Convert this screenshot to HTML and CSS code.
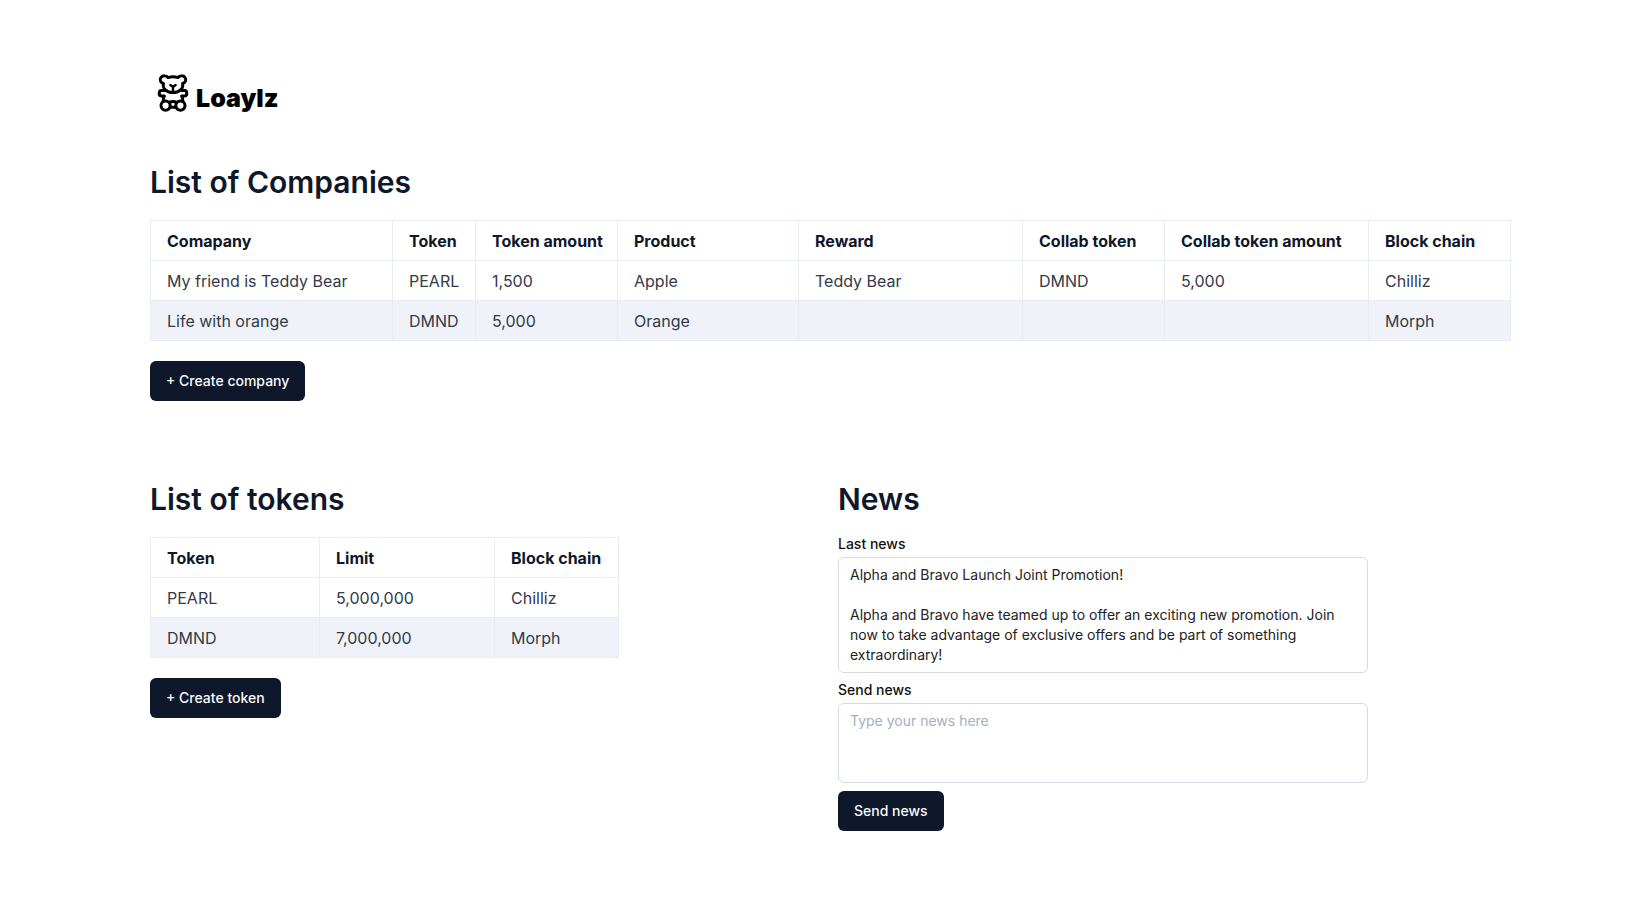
FILE: index.html
```html
<!DOCTYPE html>
<html lang="en">
<head>
<meta charset="utf-8">
<meta name="viewport" content="width=device-width, initial-scale=1">
<title>Loaylz</title>
<link rel="stylesheet" href="styles.css">
</head>
<body>
<div class="page">
  <header class="brand">
    <svg class="brand-icon" viewBox="0 0 32 38" aria-hidden="true">
      <g fill="none" stroke="currentColor" stroke-width="3" stroke-linecap="round" stroke-linejoin="round">
        <path d="M11 3.600C9.500 1.400 5.500 1.200 3.900 3.600C2.200 6 3.600 8.600 6.400 9.400C5.200 14.500 9.500 18.600 16 18.600S26.800 14.500 25.600 9.400C28.400 8.600 29.800 6 28.100 3.600C26.500 1.200 22.500 1.400 21 3.600C18 2.600 14 2.600 11 3.600Z"/>
        <path stroke-width="2.400" d="M13.400 11L16 13L18.600 11M16 13V17"/>
        <path d="M8 16.400H4.600C1.400 16.400 1.400 22 4.600 22H7.400C6.600 23.500 6.200 25 6.200 27"/>
        <path d="M24 16.400H27.400C30.600 16.400 30.600 22 27.400 22H24.600C25.400 23.500 25.800 25 25.800 27"/>
        <circle cx="8.600" cy="31.600" r="4.600"/>
        <circle cx="23.400" cy="31.600" r="4.600"/>
        <path d="M12.200 28.400C14.600 27.400 17.400 27.400 19.800 28.400M13.200 33.200H18.800"/>
      </g>
    </svg>
    <span class="brand-name">Loaylz</span>
  </header>

  <main>
    <section class="companies">
      <h2 class="title">List of Companies</h2>
      <table class="table companies-table">
        <colgroup><col class="c-company"><col class="c-token"><col class="c-amount"><col class="c-product"><col class="c-reward"><col class="c-collab"><col class="c-collab-amount"><col class="c-chain"></colgroup>
        <thead>
          <tr><th>Comapany</th><th>Token</th><th>Token amount</th><th>Product</th><th>Reward</th><th>Collab token</th><th>Collab token amount</th><th>Block chain</th></tr>
        </thead>
        <tbody>
          <tr><td>My friend is Teddy Bear</td><td>PEARL</td><td>1,500</td><td>Apple</td><td>Teddy Bear</td><td>DMND</td><td>5,000</td><td>Chilliz</td></tr>
          <tr><td>Life with orange</td><td>DMND</td><td>5,000</td><td>Orange</td><td></td><td></td><td></td><td>Morph</td></tr>
        </tbody>
      </table>
      <button class="button" type="button">+ Create company</button>
    </section>

    <div class="columns">
      <section>
        <h2 class="title">List of tokens</h2>
        <table class="table tokens-table">
          <colgroup><col class="t-token"><col class="t-limit"><col class="t-chain"></colgroup>
          <thead><tr><th>Token</th><th>Limit</th><th>Block chain</th></tr></thead>
          <tbody>
            <tr><td>PEARL</td><td>5,000,000</td><td>Chilliz</td></tr>
            <tr><td>DMND</td><td>7,000,000</td><td>Morph</td></tr>
          </tbody>
        </table>
        <button class="button" type="button">+ Create token</button>
      </section>

      <section>
        <h2 class="title">News</h2>
        <form class="news">
          <label class="label" for="last-news">Last news</label>
          <textarea class="textarea last-news" id="last-news" rows="5" readonly>Alpha and Bravo Launch Joint Promotion!

Alpha and Bravo have teamed up to offer an exciting new promotion. Join now to take advantage of exclusive offers and be part of something extraordinary!</textarea>
          <label class="label" for="send-news">Send news</label>
          <textarea class="textarea send-news" id="send-news" rows="3" placeholder="Type your news here"></textarea>
          <button class="button" type="button">Send news</button>
        </form>
      </section>
    </div>
  </main>
</div>
</body>
</html>
```
FILE: styles.css
```css
* {
  box-sizing: border-box;
}

body {
  margin: 0;
  background: #fff;
  color: #0f172a;
  font-family: Inter, "Liberation Sans", sans-serif;
  font-size: 16px;
  line-height: 24px;
}

.page {
  padding: 74px 140px 80px 150px;
}

.brand {
  display: flex;
  align-items: flex-end;
  gap: 7px;
  height: 38px;
  padding-left: 7px;
  color: #000;
}

.brand-icon {
  width: 32px;
  height: 38px;
}

.brand-name {
  font-size: 25px;
  font-weight: 900;
  line-height: 28px;
}

.companies {
  margin-top: 52px;
}

.title {
  margin: 0 0 20px;
  font-size: 30px;
  font-weight: 600;
  line-height: 36px;
}

.table {
  width: 100%;
  border-collapse: collapse;
}

.table th,
.table td {
  height: 40px;
  padding: 0 8px 0 16px;
  border: 1px solid #e8edf4;
  text-align: left;
}

.table th {
  font-weight: 700;
  white-space: nowrap;
}

.table td {
  color: #333a48;
}

.table tbody tr:nth-child(even) {
  background: #eff3f9;
}

.companies-table,
.tokens-table {
  table-layout: fixed;
}

.tokens-table {
  max-width: 468px;
}

.c-company { width: 242px; }
.c-token { width: 83px; }
.c-amount { width: 142px; }
.c-product { width: 181px; }
.c-reward { width: 224px; }
.c-collab { width: 142px; }
.c-collab-amount { width: 204px; }
.c-chain { width: 142px; }

.t-token { width: 169px; }
.t-limit { width: 175px; }
.t-chain { width: 124px; }

.button {
  display: block;
  height: 40px;
  margin-top: 20px;
  padding: 0 16px;
  border: 0;
  border-radius: 6px;
  background: #0f172a;
  color: #f8fafc;
  font: 500 14px/20px Inter, "Liberation Sans", sans-serif;
  cursor: pointer;
}

.columns {
  display: grid;
  grid-template-columns: 1fr 1fr;
  gap: 16px;
  margin-top: 80px;
}

.news {
  display: flex;
  flex-direction: column;
  align-items: flex-start;
  max-width: 530px;
}

.label {
  margin-bottom: 6px;
  color: #111;
  font-size: 14px;
  font-weight: 500;
  line-height: 14px;
}

.textarea {
  display: block;
  width: 100%;
  padding: 7px 11px;
  border: 1px solid #d5dbe4;
  border-radius: 6px;
  background: #fff;
  color: #222;
  font: 400 14px/20px Inter, "Liberation Sans", sans-serif;
  resize: none;
}

.textarea::placeholder {
  color: #a3b0c2;
}

.last-news {
  margin-bottom: 10px;
}

.send-news {
  min-height: 80px;
}

.news .button {
  margin-top: 8px;
}
```
